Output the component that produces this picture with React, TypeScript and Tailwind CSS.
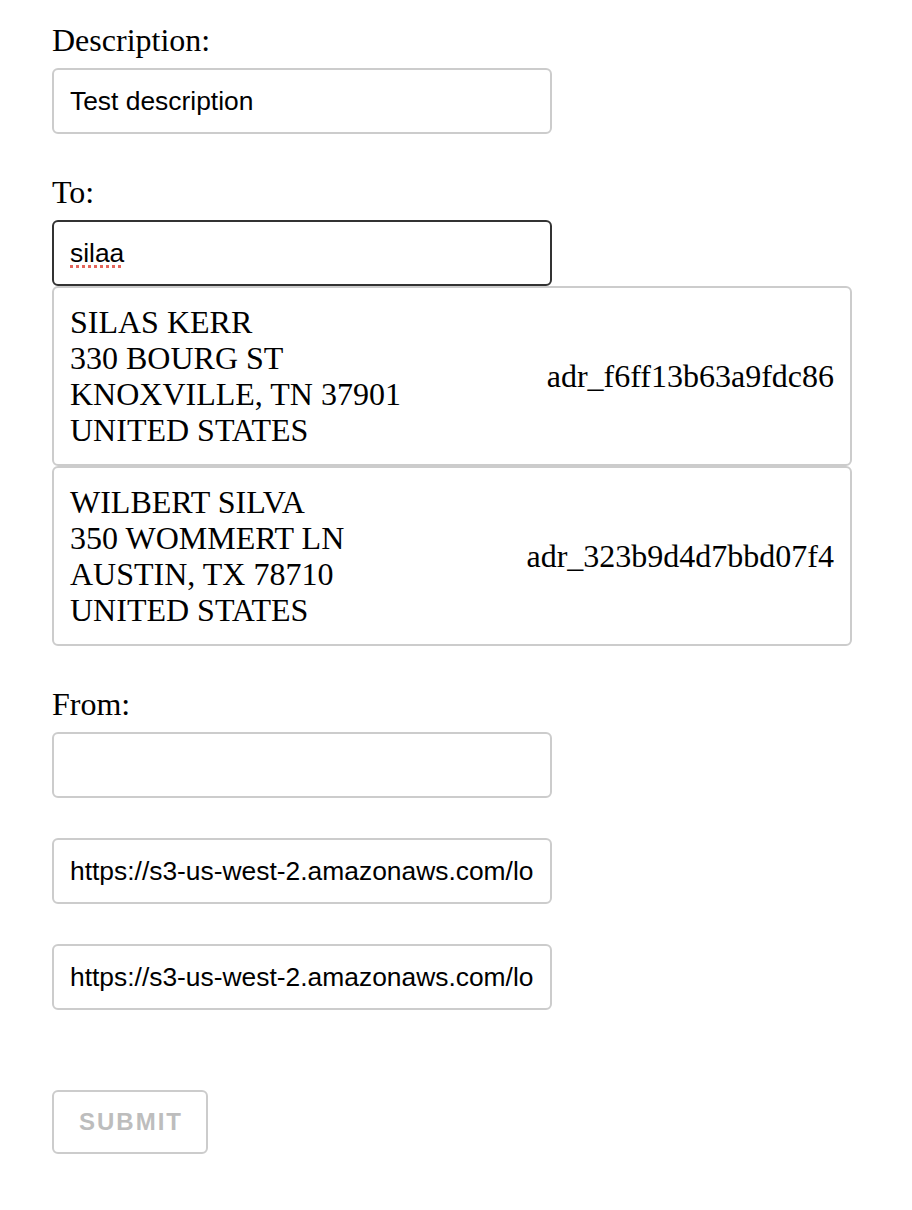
import React from "react";

const serif = "font-['Liberation_Serif','Times_New_Roman',serif]";
const sans = "font-['Liberation_Sans',Arial,sans-serif]";

function Label({ children }: { children: React.ReactNode }) {
  return (
    <div className={`${serif} text-[32px] leading-[36px] text-black mb-[10px]`}>{children}</div>
  );
}

function Field({
  value,
  dark,
  className = "",
  children,
}: {
  value?: string;
  dark?: boolean;
  className?: string;
  children?: React.ReactNode;
}) {
  return (
    <div
      className={`w-[500px] h-[66px] rounded-[6px] border-2 ${
        dark ? "border-[#333333]" : "border-[#cccccc]"
      } bg-white px-[16px] flex items-center ${sans} text-[26.4px] leading-[30px] text-black ${className}`}
    >
      <div className="flex-1 min-w-0 overflow-hidden whitespace-nowrap">{children ?? value}</div>
    </div>
  );
}

function AddressItem({ lines, id }: { lines: string[]; id: string }) {
  return (
    <div
      className={`w-[800px] h-[180px] rounded-[6px] border-2 border-[#cccccc] bg-white px-[16px] flex items-center justify-between ${serif} text-[32px] leading-[36px] text-black`}
    >
      <div>
        {lines.map((l) => (
          <div key={l}>{l}</div>
        ))}
      </div>
      <div>{id}</div>
    </div>
  );
}

export default function App() {
  return (
    <div className="bg-white min-h-[1210px] pl-[52px] pt-[22px]">
      <Label>Description:</Label>
      <Field value="Test description" className="mb-[40px]" />

      <Label>To:</Label>
      <Field dark>
        <span className="underline decoration-dotted decoration-[#e5645a] decoration-[3px] underline-offset-[3px]">
          silaa
        </span>
      </Field>
      <AddressItem
        lines={["SILAS KERR", "330 BOURG ST", "KNOXVILLE, TN 37901", "UNITED STATES"]}
        id="adr_f6ff13b63a9fdc86"
      />
      <AddressItem
        lines={["WILBERT SILVA", "350 WOMMERT LN", "AUSTIN, TX 78710", "UNITED STATES"]}
        id="adr_323b9d4d7bbd07f4"
      />

      <div className="h-[40px]" />
      <Label>From:</Label>
      <Field className="mb-[40px]" />
      <Field
        value="https://s3-us-west-2.amazonaws.com/lob-assets/card_horizontal.pdf"
        className="mb-[40px]"
      />
      <Field value="https://s3-us-west-2.amazonaws.com/lob-assets/card_horizontal.pdf" />

      <button
        type="button"
        disabled
        className={`mt-[80px] w-[156px] h-[64px] rounded-[6px] border-2 border-[#cccccc] bg-white ${sans} font-bold text-[24px] tracking-[2px] text-[#bdbdbd] flex items-center justify-center pl-[2px]`}
      >
        SUBMIT
      </button>
    </div>
  );
}
